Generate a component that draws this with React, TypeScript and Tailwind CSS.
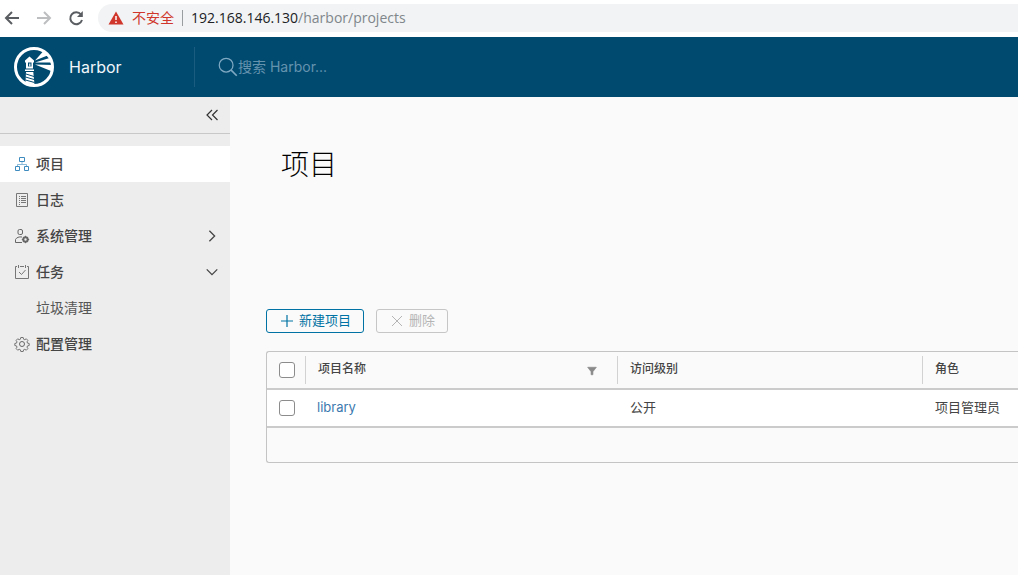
import type { ReactNode } from "react";

type IconProps = { className?: string };

const LighthouseLogo = () => (
  <svg viewBox="0 0 40 40" className="size-10" aria-hidden="true">
    <circle cx="20" cy="20" r="18.500" fill="none" stroke="#fff" strokeWidth="3" />
    <g fill="#fff">
      <path d="m15.500 9.500 4.500 4v2h-1v6h-7v-6h-1v-2z" />
      <path d="M11 22.500h9V24h-9zM12 25h7.300l1.200 13-9-2z" />
      <path d="M21 13.500 29 4.500l4.500 4zM21 15.500l14.500-4.500 2 4.500zM21 17.500l17 .500-1 6z" />
    </g>
    <path d="M14 15.500h3.500v4H14z" fill="#004a70" />
    <path d="M15.200 16.500h1.200v3h-1.200z" fill="#fff" />
    <path d="m12 27 8 2.500M11.500 30l8.500 2.500M11.500 33l9 2.500" stroke="#004a70" strokeWidth="1" />
  </svg>
);

const Icon = ({ className = "size-4", children }: IconProps & { children: ReactNode }) => (
  <svg
    viewBox="0 0 16 16"
    className={`shrink-0 ${className}`}
    fill="none"
    stroke="currentColor"
    aria-hidden="true"
  >
    {children}
  </svg>
);

const ProjectsIcon = () => (
  <Icon className="size-4 text-[#3e8cbf]">
    <path d="M5.500 1.500h5v4h-5zM1.500 10.500h4v4h-4zM10.500 10.500h4v4h-4z" />
    <path d="M8 5.500V8M3.500 10.500V8.500h9v2" strokeOpacity="0.600" />
  </Icon>
);

const LogsIcon = () => (
  <Icon className="size-4 text-[#777]">
    <path d="M2.500 1.500h11v13h-11zM5 4.500h1M7 4.500h5M5 6.500h1M7 6.500h5M5 8.500h1M7 8.500h5M5 10.500h1M7 10.500h5M5 12.500h1" />
  </Icon>
);

const AdminIcon = () => (
  <Icon className="size-4 text-[#666]">
    <rect x="4" y="1.500" width="4.500" height="5" rx="1.500" />
    <path d="M8 14.500H1.500v-3C2.500 9.500 5 8.500 8 9" />
    <circle cx="11.500" cy="11.500" r="2.200" strokeWidth="2" />
    <path d="M11.500 7.800v1.400M11.500 13.800v1.400M7.800 11.500h1.400M13.800 11.500h1.400" />
  </Icon>
);

const TasksIcon = () => (
  <Icon className="size-4 text-[#777]">
    <path d="M3 2.500H1.500v12h13v-12H13M6 2.500h4M4.500 1v3M11.500 1v3M5 8l2.500 2.500L11.500 6" />
  </Icon>
);

const SettingsIcon = () => (
  <Icon className="size-4 text-[#666]">
    <circle cx="8" cy="8" r="2.500" />
    <path d="m6.800 1.500-.4 1.700-1.200.5-1.500-.9-1.600 1.600.9 1.500-.5 1.200-1.700.4v2l1.700.4.5 1.200-.9 1.500 1.600 1.600 1.500-.9 1.200.5.4 1.700h2.400l.4-1.700 1.200-.5 1.500.9 1.600-1.600-.9-1.500.5-1.200 1.700-.4v-2l-1.700-.4-.5-1.200.9-1.500-1.600-1.600-1.500.9-1.200-.5-.4-1.700z" strokeWidth="0.900" />
  </Icon>
);

const BrowserBar = () => (
  <div className="flex h-[37px] items-center bg-white pb-px font-['Open_Sans','Noto_Sans_CJK_SC',sans-serif] text-sm">
    <button type="button" aria-label="Back" className="ml-1 text-[#5a5d61]">
      <Icon>
        <path d="M15 8H2M8 2 2 8l6 6" strokeWidth="2" />
      </Icon>
    </button>
    <button type="button" aria-label="Forward" className="ml-4 text-[#bcbec0]">
      <Icon>
        <path d="M1 8h13M8 2l6 6-6 6" strokeWidth="2" />
      </Icon>
    </button>
    <button type="button" aria-label="Reload" className="ml-4 text-[#5a5d61]">
      <Icon>
        <path d="M13 4.500A6 6 0 1 0 14 10" strokeWidth="2" />
        <path d="M14.800 1v6H9z" fill="currentColor" stroke="none" />
      </Icon>
    </button>
    <div className="ml-3.5 flex h-7 flex-1 items-center rounded-l-full bg-[#f1f3f4] pl-2.5">
      <svg viewBox="0 0 16 16" className="size-4" aria-hidden="true">
        <path d="M8 1.500 15.500 14.500H.5z" fill="#d0362b" />
        <path d="M8 6v4M8 11.500v1.500" stroke="#fff" strokeWidth="1.500" />
      </svg>
      <span className="ml-2 text-[#d0362b]">不安全</span>
      <span className="mx-2 h-4 w-px bg-[#9a9da0]" />
      <span className="text-[#202124]">192.168.146.130</span>
      <span className="text-[#80868b]">/harbor/projects</span>
    </div>
  </div>
);

const AppHeader = () => (
  <header className="flex h-[60px] items-center bg-[#004a70]">
    <a href="#" className="flex w-[194px] items-center gap-[15px] pl-3.5 text-base text-[#f0f6fa]">
      <LighthouseLogo />
      Harbor
    </a>
    <label className="flex h-10 flex-1 items-center border-l border-[#1a5c7f] pl-[23px] text-[#7fa9c2]">
      <Icon className="size-5">
        <circle cx="6.500" cy="6.500" r="5.500" />
        <path d="m10.500 10.500 4.500 4.500" strokeWidth="1.300" />
      </Icon>
      <input
        type="text"
        aria-label="搜索 Harbor"
        placeholder="搜索 Harbor..."
        className="w-full bg-transparent text-sm outline-none placeholder:text-[#6593ae]"
      />
    </label>
  </header>
);

type NavItemProps = {
  icon: ReactNode;
  label: string;
  active?: boolean;
  chevron?: "right" | "down";
};

const NavItem = ({ icon, label, active, chevron }: NavItemProps) => (
  <a
    href="#"
    className={`flex h-9 items-center gap-1.5 pr-[11px] pl-3.5 text-sm font-medium text-[#454545] ${active ? "bg-white" : ""}`}
  >
    {icon}
    <span className="flex-1">{label}</span>
    {chevron && (
      <Icon className="size-3.5">
        {chevron === "right" ? (
          <path d="m5 2 6 6-6 6" strokeWidth="1.500" />
        ) : (
          <path d="m2 5 6 6 6-6" strokeWidth="1.500" />
        )}
      </Icon>
    )}
  </a>
);

const Sidebar = () => (
  <nav className="w-[230px] shrink-0 bg-[#ededed]">
    <div className="flex h-[37px] items-center justify-end border-b border-[#c8c8c8] pr-2.5">
      <button type="button" aria-label="Collapse" className="text-[#333]">
        <Icon>
          <path d="M8 3 3 8l5 5M13.500 3l-5 5 5 5" strokeWidth="1.200" />
        </Icon>
      </button>
    </div>
    <div className="pt-3">
      <NavItem icon={<ProjectsIcon />} label="项目" active />
      <NavItem icon={<LogsIcon />} label="日志" />
      <NavItem icon={<AdminIcon />} label="系统管理" chevron="right" />
      <NavItem icon={<TasksIcon />} label="任务" chevron="down" />
      <a href="#" className="flex h-9 items-center pl-9 text-sm text-[#565656]">
        垃圾清理
      </a>
      <NavItem icon={<SettingsIcon />} label="配置管理" />
    </div>
  </nav>
);

const Checkbox = ({ label }: { label: string }) => (
  <input
    type="checkbox"
    aria-label={label}
    className="ml-3 block size-4 appearance-none rounded-[3px] border border-[#8c8c8c] bg-white"
  />
);

const HeaderCell = ({ label, filter }: { label: string; filter?: boolean }) => (
  <th scope="col" className="p-0 text-left font-medium">
    <div className="flex h-7 items-center justify-between border-l border-[#d2d2d2] pr-5 pb-0.5 pl-3">
      {label}
      {filter && (
        <button type="button" aria-label="Filter" className="pt-1 text-[#8a8a8a]">
          <Icon className="size-2.5">
            <path d="M1 2h14L9.500 9v5h-3V9z" fill="currentColor" />
          </Icon>
        </button>
      )}
    </div>
  </th>
);

const ProjectTable = () => (
  <div className="mt-[18px] rounded-l-[3px] border-y border-l border-[#c4c4c4]">
    <table className="w-full table-fixed border-collapse text-[#454545]">
      <colgroup>
        <col className="w-[38px]" />
        <col className="w-[312px]" />
        <col className="w-[305px]" />
        <col />
      </colgroup>
      <thead className="text-xs">
        <tr className="h-[37px]">
          <th className="p-0">
            <Checkbox label="全选" />
          </th>
          <HeaderCell label="项目名称" filter />
          <HeaderCell label="访问级别" />
          <HeaderCell label="角色" />
        </tr>
      </thead>
      <tbody className="text-[13px]">
        <tr className="h-[38px] border-y-2 border-[#cbcbcb] bg-white">
          <td className="p-0">
            <Checkbox label="library" />
          </td>
          <td className="p-0 pl-3">
            <a href="#" className="text-[#3c79ae]">library</a>
          </td>
          <td className="p-0 pl-[13px]">公开</td>
          <td className="p-0 pl-[13px] whitespace-nowrap">项目管理员</td>
        </tr>
      </tbody>
    </table>
    <div className="h-[34px]" />
  </div>
);

export default function App() {
  return (
    <div className="flex min-h-screen flex-col bg-[#fafafa] font-['Inter','Noto_Sans_CJK_SC',sans-serif]">
      <BrowserBar />
      <AppHeader />
      <div className="flex flex-1">
        <Sidebar />
        <main className="min-w-0 flex-1 pl-9">
          <h1 className="mt-[50px] pl-[15px] text-[28px] leading-9 font-light text-black">项目</h1>
          <div className="mt-[126px] flex gap-3 text-[13px]">
            <button
              type="button"
              className="flex h-6 w-[98px] items-center justify-center gap-1 rounded-[3px] border border-[#0072a3] text-[#0072a3]"
            >
              <Icon>
                <path d="M8 2v12M2 8h12" strokeWidth="1.200" />
              </Icon>
              新建项目
            </button>
            <button
              type="button"
              disabled
              className="flex h-6 w-[72px] items-center justify-center gap-1 rounded-[3px] border border-[#c6c6c6] text-[#b5b5b5]"
            >
              <Icon>
                <path d="m3 3 10 10M13 3 3 13" />
              </Icon>
              删除
            </button>
          </div>
          <ProjectTable />
        </main>
      </div>
    </div>
  );
}
